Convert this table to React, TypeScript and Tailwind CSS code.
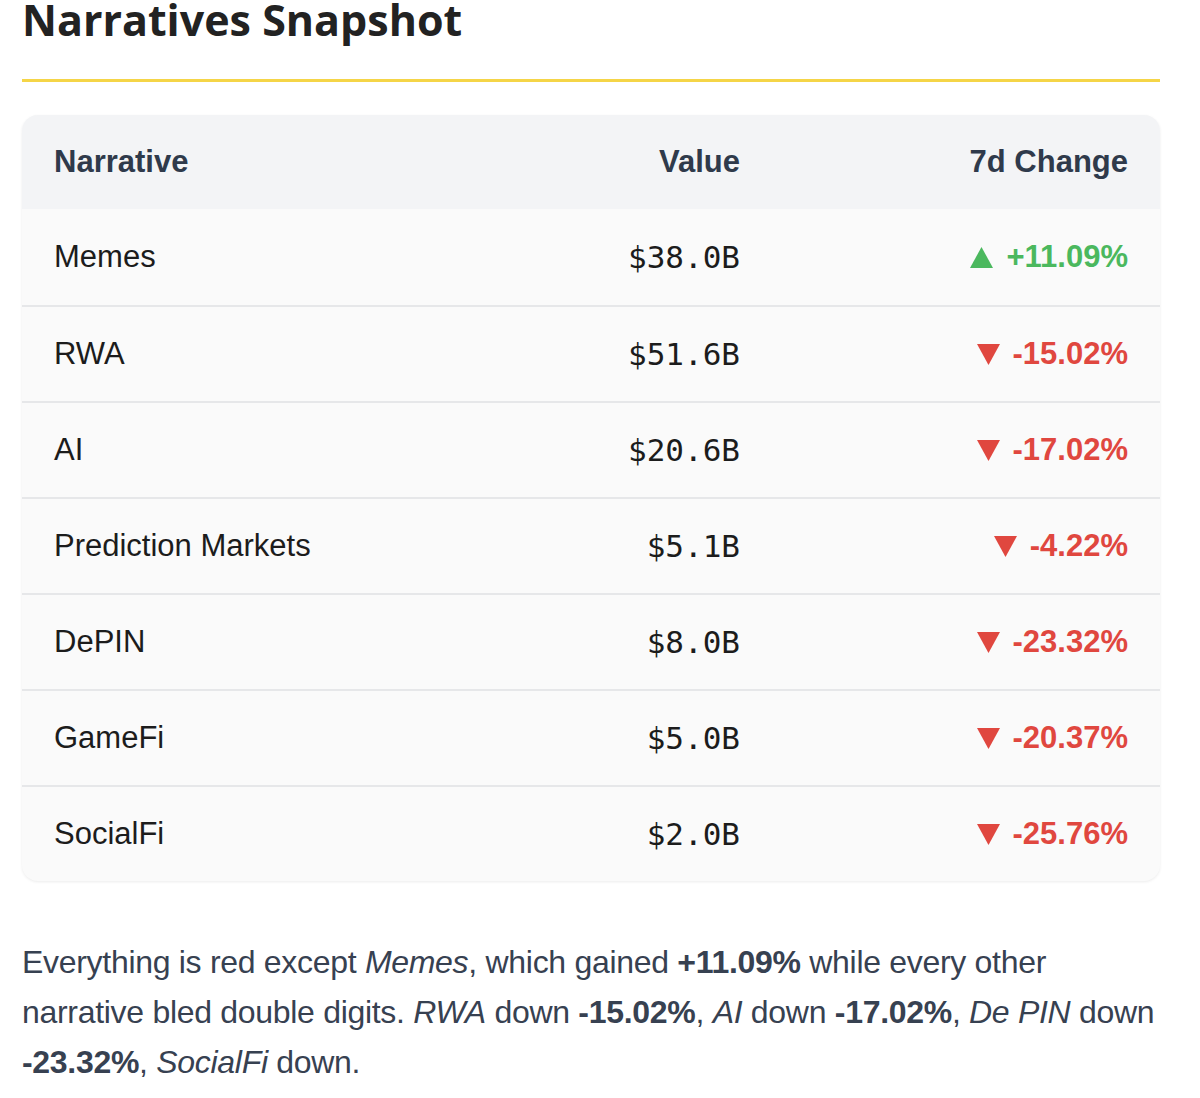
import React from 'react'

const rows = [
  { name: 'Memes', value: '$38.0B', change: '+11.09%', up: true },
  { name: 'RWA', value: '$51.6B', change: '-15.02%', up: false },
  { name: 'AI', value: '$20.6B', change: '-17.02%', up: false },
  { name: 'Prediction Markets', value: '$5.1B', change: '-4.22%', up: false },
  { name: 'DePIN', value: '$8.0B', change: '-23.32%', up: false },
  { name: 'GameFi', value: '$5.0B', change: '-20.37%', up: false },
  { name: 'SocialFi', value: '$2.0B', change: '-25.76%', up: false },
]

function Arrow({ up }: { up: boolean }) {
  return (
    <svg width='23' height='21' viewBox='0 0 23 21' className='inline-block mr-[13px] align-[-1px]'>
      {up ? <path d='M11.5 0 L23 21 L0 21 Z' fill='#4bb85e' /> : <path d='M0 0 L23 0 L11.5 21 Z' fill='#e0473f' />}
    </svg>
  )
}

export default function App() {
  return (
    <div className='w-[1200px] h-[1098px] bg-white overflow-hidden pl-[22px] pr-[40px]'>
      {/** heading */}
      <h1 className="mt-[-8px] text-[43px] leading-[56px] font-bold text-[#222] font-['Open_Sans',sans-serif]">
        Narratives Snapshot
      </h1>
      <div className='mt-[31px] h-[3px] bg-[#f5d547]' />

      {/** table */}
      <div className="mt-[33px] rounded-2xl overflow-hidden bg-[#fafafa] shadow-[0_1px_3px_rgba(0,0,0,0.08)] font-['Liberation_Sans',Arial,sans-serif]">
        <div className='grid grid-cols-[450px_300px_388px] h-[94px] items-center bg-[#f3f4f6] text-[31px] font-bold text-[#2f3a4b]'>
          <div className='pl-8'>Narrative</div>
          <div className='pr-8 text-right'>Value</div>
          <div className='pr-8 text-right'>7d Change</div>
        </div>
        {rows.map((r, i) => (
          <div
            key={i}
            className={`grid grid-cols-[450px_300px_388px] h-[96px] items-center ${i > 0 ? 'border-t-2 border-[#e6e7e9]' : ''}`}
          >
            <div className='pl-8 text-[31px] text-[#1c1c1c]'>{r.name}</div>
            <div className="pr-8 text-right text-[31px] text-[#1c1c1c] font-['DejaVu_Sans_Mono',monospace]">{r.value}</div>
            <div className={`pr-8 text-right text-[31px] font-bold ${r.up ? 'text-[#4bb85e]' : 'text-[#e0473f]'}`}>
              <Arrow up={r.up} />
              {r.change}
            </div>
          </div>
        ))}
      </div>

      {/** summary */}
      <p className="mt-[56px] mr-[-20px] text-[32px] leading-[50px] text-[#374151] font-['Liberation_Sans',Arial,sans-serif] tracking-[-0.3px]">
        Everything is red except <em>Memes</em>, which gained <strong>+11.09%</strong> while every other
        <br />
        narrative bled double digits. <em>RWA</em> down <strong>-15.02%</strong>, <em>AI</em> down{' '}
        <strong>-17.02%</strong>, <em>De PIN</em> down
        <br />
        <strong>-23.32%</strong>, <em>SocialFi</em> down.
      </p>
    </div>
  )
}
